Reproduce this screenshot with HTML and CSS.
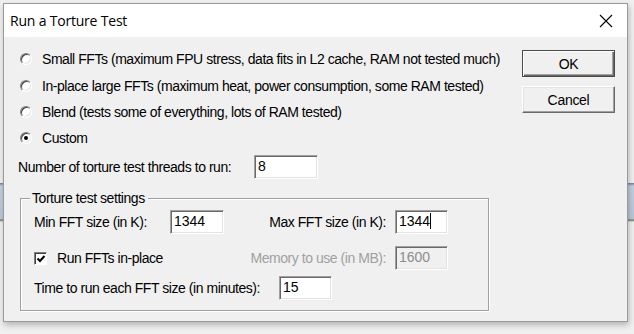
FILE: index.html
```html
<!DOCTYPE html>
<html lang="en">
<head>
    <meta charset="UTF-8">
    <title>Run a Torture Test</title>
    <link rel="stylesheet" href="styles.css">
</head>
<body>
    <div class="dialog">
        <div class="titlebar">
            <span class="title">Run a Torture Test</span>
            <svg class="close" width="14" height="14" viewBox="0 0 14 14">
                <path d="M1 1 L13 13 M13 1 L1 13" stroke="#000" stroke-width="1.1" fill="none"/>
            </svg>
        </div>
        <div class="client">
            <div class="top">
                <div class="options">
                    <div class="radio-row"><span class="radio"></span><span>Small FFTs (maximum FPU stress, data fits in L2 cache, RAM not tested much)</span></div>
                    <div class="radio-row"><span class="radio"></span><span>In-place large FFTs (maximum heat, power consumption, some RAM tested)</span></div>
                    <div class="radio-row"><span class="radio"></span><span>Blend (tests some of everything, lots of RAM tested)</span></div>
                    <div class="radio-row"><span class="radio checked"></span><span>Custom</span></div>
                    <div class="field-row threads">
                        <span class="label">Number of torture test threads to run:</span>
                        <span class="edit w64">8</span>
                    </div>
                </div>
                <div class="buttons">
                    <div class="btn default">OK</div>
                    <div class="btn">Cancel</div>
                </div>
            </div>
            <div class="group">
                <div class="legend">Torture test settings</div>
                <div class="group-row">
                    <div class="cell left">
                        <span class="label min-label">Min FFT size (in K):</span>
                        <span class="edit w54">1344</span>
                    </div>
                    <div class="cell right">
                        <span class="label">Max FFT size (in K):</span>
                        <span class="edit w53">1344<span class="caret"></span></span>
                    </div>
                </div>
                <div class="group-row">
                    <div class="cell left">
                        <span class="check"><svg width="10" height="10" viewBox="0 0 10 10"><path d="M1.5 4.5 L4 7 L8.5 2" stroke="#000" stroke-width="2" fill="none"/></svg></span>
                        <span>Run FFTs in-place</span>
                    </div>
                    <div class="cell right disabled">
                        <span class="label">Memory to use (in MB):</span>
                        <span class="edit w53 off">1600</span>
                    </div>
                </div>
                <div class="group-row">
                    <div class="cell">
                        <span class="label time-label">Time to run each FFT size (in minutes):</span>
                        <span class="edit w53">15</span>
                    </div>
                </div>
            </div>
        </div>
    </div>
</body>
</html>
```

FILE: styles.css
```css
body {
    margin: 0;
    width: 634px;
    height: 334px;
    overflow: hidden;
    background: linear-gradient(#f0f0f0 0, #f0f0f0 183px, #6f7f92 183px, #c3d0de 186px, #b9c7d7 219px, #6e6e6e 220px, #f0f0f0 222px);
    font-family: "Liberation Sans", Arial, sans-serif;
    font-size: 14px;
    letter-spacing: -0.45px;
    white-space: nowrap;
    color: #000;
}
.dialog {
    margin: 3px 0 0 3px;
    width: 623px;
    height: 317px;
    border: 1px solid #9a9a9a;
    background: #f0f0f0;
    box-shadow: 1px 3px 6px rgba(0, 0, 0, 0.25);
    display: flex;
    flex-direction: column;
}
.titlebar {
    height: 33px;
    background: #fff;
    display: flex;
    align-items: center;
    justify-content: space-between;
    padding: 0 14px 0 6px;
}
.title {
    font-family: "Open Sans", "Noto Sans", sans-serif;
    font-size: 14px;
    letter-spacing: -0.2px;
}
.close {
    margin-top: 1px;
}
.client {
    flex: 1;
    padding: 8px 0 0 14px;
}
.top {
    display: flex;
}
.options {
    width: 500px;
}
.radio-row {
    display: flex;
    align-items: center;
    height: 26px;
}
.radio-row:first-child {
    height: 28px;
}
.radio {
    flex-shrink: 0;
    box-sizing: border-box;
    width: 12px;
    height: 12px;
    border-radius: 50%;
    border: 1px solid;
    border-color: #808080 #fff #fff #808080;
    box-shadow: inset 1px 1px 0 #404040, inset -1px -1px 0 #e3e3e3;
    background: #fff;
    margin: 0 10px 0 2px;
    position: relative;
}
.radio.checked::after {
    content: "";
    position: absolute;
    left: 3px;
    top: 3px;
    width: 4px;
    height: 4px;
    border-radius: 50%;
    background: #000;
}
.field-row {
    display: flex;
    align-items: center;
}
.threads {
    margin-top: 4px;
    height: 24px;
}
.threads .label {
    flex-shrink: 0;
    width: 236px;
}
.edit {
    flex-shrink: 0;
    display: inline-block;
    box-sizing: border-box;
    height: 24px;
    line-height: 20px;
    padding-left: 3px;
    background: #fff;
    border: 1px solid;
    border-color: #a0a0a0 #fff #fff #a0a0a0;
    box-shadow: inset 1px 1px 0 #696969, inset -1px -1px 0 #e3e3e3;
    letter-spacing: 0;
}
.w64 { width: 64px; }
.w54 { width: 54px; }
.w53 { width: 53px; }
.edit.off {
    background: #f0f0f0;
    color: #8d8d8d;
}
.caret {
    display: inline-block;
    width: 1px;
    height: 16px;
    background: #000;
    vertical-align: -3px;
}
.buttons {
    margin: 5px 0 0 4px;
    display: flex;
    flex-direction: column;
    gap: 9px;
}
.btn {
    box-sizing: border-box;
    width: 93px;
    height: 27px;
    display: flex;
    align-items: center;
    justify-content: center;
    background: #f0f0f0;
    border: 1px solid;
    border-color: #fff #696969 #696969 #fff;
    box-shadow: inset -1px -1px 0 #a0a0a0, inset 1px 1px 0 #e3e3e3;
    letter-spacing: -0.3px;
}
.btn.default {
    border: 1px solid #4a4a4a;
    box-shadow: inset 1px 1px 0 #fff, inset -1px -1px 0 #696969, inset -2px -2px 0 #a0a0a0;
}
.group {
    box-sizing: border-box;
    margin: 19px 0 0 2px;
    width: 469px;
    height: 113px;
    border: 1px solid #a0a0a0;
    box-shadow: 1px 1px 0 #fff, inset 1px 1px 0 #fff;
    padding: 11px 0 0 13px;
    position: relative;
}
.legend {
    position: absolute;
    left: 9px;
    top: -9px;
    padding: 0 3px 0 2px;
    background: #f0f0f0;
}
.group-row {
    display: flex;
    align-items: center;
    height: 24px;
    margin-bottom: 12px;
}
.group-row:nth-child(3) {
    margin-bottom: 6px;
}
.cell {
    display: flex;
    align-items: center;
}
.cell.left {
    width: 250px;
}
.label {
    flex-shrink: 0;
}
.min-label {
    width: 136px;
}
.time-label {
    width: 245px;
}
.cell.right {
    width: 164px;
    justify-content: flex-end;
}
.cell.right .label {
    margin-right: 9px;
}
.disabled {
    color: #a0a0a0;
}
.check {
    flex-shrink: 0;
    box-sizing: border-box;
    width: 13px;
    height: 13px;
    margin-right: 10px;
    background: #fff;
    border: 1px solid;
    border-color: #808080 #fff #fff #808080;
    box-shadow: inset 1px 1px 0 #404040;
    display: flex;
    align-items: center;
    justify-content: center;
}
.check svg {
    margin: 1px 0 0 1px;
}
```
